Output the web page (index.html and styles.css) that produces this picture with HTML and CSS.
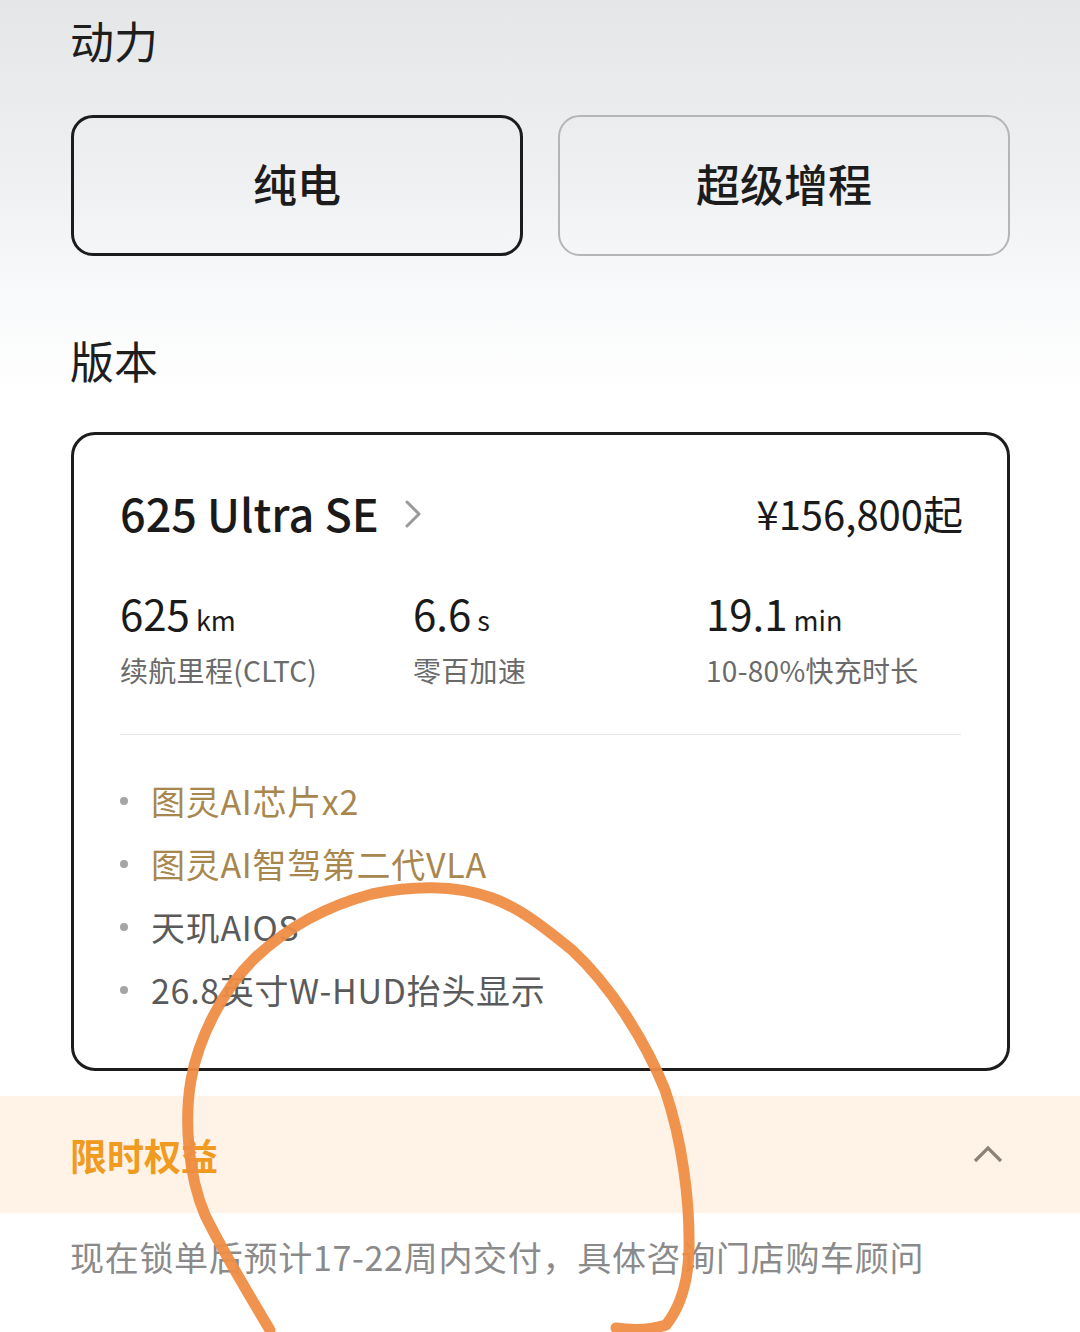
FILE: index.html
```html
<!DOCTYPE html>
<html lang="zh-CN">
<head>
<meta charset="utf-8">
<link rel="stylesheet" href="styles.css">
</head>
<body>
<div class="page">
  <div class="section">
    <h2 class="heading h-power">动力</h2>
    <div class="options">
      <div class="option active">纯电</div>
      <div class="option">超级增程</div>
    </div>
    <h2 class="heading h-version">版本</h2>
    <div class="card">
      <div class="card-head">
        <div class="title">625 Ultra SE
          <svg class="chev" width="20" height="30" viewBox="0 0 20 30"><path d="M4 3 L16 15 L4 27" fill="none" stroke="#9a9a9a" stroke-width="3" stroke-linecap="round" stroke-linejoin="round"/></svg>
        </div>
        <div class="price">¥156,800起</div>
      </div>
      <div class="stats">
        <div class="stat">
          <div class="num">625<span class="unit">km</span></div>
          <div class="label">续航里程(CLTC)</div>
        </div>
        <div class="stat">
          <div class="num">6.6<span class="unit">s</span></div>
          <div class="label">零百加速</div>
        </div>
        <div class="stat">
          <div class="num">19.1<span class="unit">min</span></div>
          <div class="label">10-80%快充时长</div>
        </div>
      </div>
      <div class="divider"></div>
      <ul class="features">
        <li class="gold">图灵AI芯片x2</li>
        <li class="gold">图灵AI智驾第二代VLA</li>
        <li>天玑AIOS</li>
        <li>26.8英寸W-HUD抬头显示</li>
      </ul>
    </div>
  </div>
  <div class="band">
    <div class="band-title">限时权益</div>
    <svg class="up" width="32" height="22" viewBox="0 0 32 22"><path d="M3 19 L16 6 L29 19" fill="none" stroke="#8d8178" stroke-width="3.2" stroke-linejoin="miter"/></svg>
  </div>
  <div class="note">现在锁单后预计17-22周内交付，具体咨询门店购车顾问</div>
  <svg class="scribble" width="1080" height="1332" viewBox="0 0 1080 1332">
    <path d="M270 1330 C252 1300 222 1250 205 1215 C188 1175 184 1120 191 1080 C198 1040 222 990 255 958 C290 925 330 905 372 894 C410 886 455 884 492 898 C520 908 545 928 572 950 C610 985 645 1040 665 1090 C682 1140 690 1200 689 1250 C688 1285 678 1310 666 1325 C650 1330 630 1330 616 1328" fill="none" stroke="#ee8d45" stroke-width="11" stroke-linecap="round" stroke-linejoin="round" opacity="0.95"/>
  </svg>
</div>
</body>
</html>
```

FILE: styles.css
```css
* { box-sizing: border-box; margin: 0; padding: 0; }
html, body { width: 1080px; height: 1332px; overflow: hidden; }
body {
  font-family: "Noto Sans CJK SC", "Noto Sans", sans-serif;
  color: #1c1c1c;
  background: linear-gradient(180deg, #e4e6e8 0px, #eff0f2 180px, #f8f9fa 290px, #ffffff 400px);
}
.page { position: relative; width: 1080px; height: 1332px; }
.section { padding: 10px 70px 0 71px; }
.heading {
  font-size: 44px;
  font-weight: 400;
  line-height: 60px;
  height: 60px;
  margin-left: -1px;
  color: #1e1e1e;
}
.options {
  margin-top: 45px;
  display: grid;
  grid-template-columns: 452px 452px;
  column-gap: 35px;
}
.option {
  height: 141px;
  border: 2px solid #b3b5b7;
  border-radius: 22px;
  display: flex;
  align-items: center;
  justify-content: center;
  font-size: 44px;
  font-weight: 500;
  color: #1c1c1c;
  padding-bottom: 6px;
}
.option.active { border: 3px solid #1c1c1c; }
.h-version { margin-top: 74px; }
.card {
  margin-top: 42px;
  width: 939px;
  height: 639px;
  border: 3px solid #1c1c1c;
  border-radius: 24px;
  background: #fff;
  padding: 48px 46px 0 46px;
}
.card-head {
  display: flex;
  justify-content: space-between;
  align-items: center;
  height: 60px;
}
.title {
  font-size: 45px;
  font-weight: 500;
  line-height: 60px;
  display: flex;
  align-items: center;
  color: #1a1a1a;
}
.chev { margin-left: 24px; margin-top: 2px; }
.price { font-size: 40px; font-weight: 400; line-height: 60px; color: #1a1a1a; margin-right: -2px; }
.stats {
  margin-top: 42px;
  display: grid;
  grid-template-columns: 293px 293px 1fr;
}
.num { font-size: 42px; line-height: 56px; color: #1a1a1a; }
.unit { font-size: 27px; margin-left: 6px; }
.label { font-size: 28px; line-height: 44px; color: #6a6a6a; margin-top: 0; letter-spacing: 0.3px; }
.divider { margin-top: 42px; height: 1px; background: #e6e6e6; }
.features {
  list-style: none;
  margin-top: 34px;
}
.features li {
  position: relative;
  font-size: 34px;
  line-height: 63px;
  height: 63px;
  padding-left: 31px;
  color: #5a5a5a;
  letter-spacing: 0.7px;
}
.features li::before {
  content: "";
  position: absolute;
  left: 0;
  top: 28px;
  width: 8px;
  height: 8px;
  border-radius: 50%;
  background: #a5a5a5;
}
.features li.gold { color: #a8874e; }
.band {
  margin-top: 25px;
  height: 117px;
  background: #fff2e6;
  display: flex;
  align-items: center;
  justify-content: space-between;
  padding: 0 76px 0 70px;
}
.band-title { font-size: 37px; font-weight: 700; color: #f09a20; line-height: 50px; }
.up { margin-top: -4px; }
.note {
  padding: 20px 70px 0 70px;
  font-size: 34px;
  line-height: 48px;
  color: #8a8a8a;
  letter-spacing: 0.7px;
}
.scribble { position: absolute; left: 0; top: 0; pointer-events: none; }
```
